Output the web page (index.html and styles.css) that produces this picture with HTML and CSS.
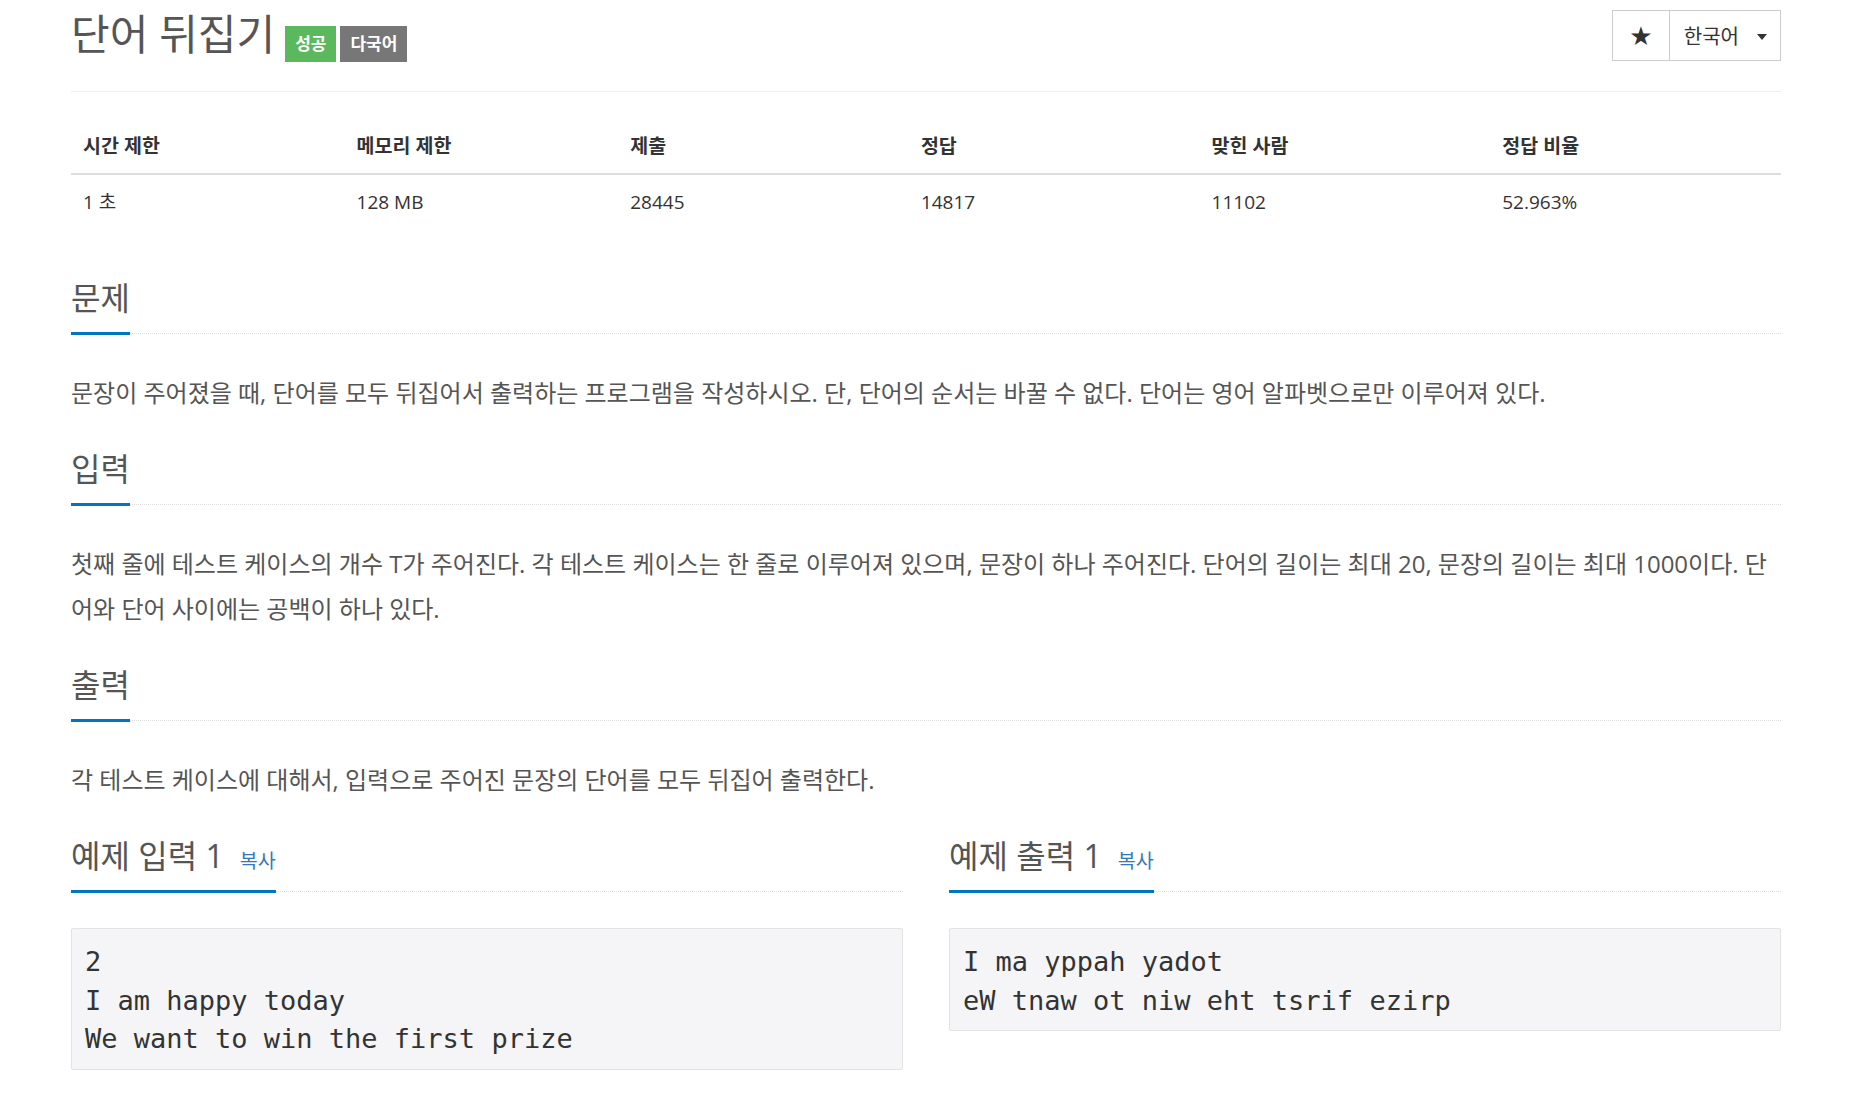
FILE: index.html
```html
<!DOCTYPE html>
<html>
	<head>
		<meta charset="UTF-8">
		<title>단어 뒤집기</title>
		<link rel="stylesheet" href="styles.css">
	</head>
	<body>
		<div class="container">
			<div class="page-header">
				<h1 class="title">
					<span class="title-text">단어 뒤집기</span>
					<span class="label label-success">성공</span>
					<span class="label label-default">다국어</span>
				</h1>
				<div class="btn-group">
					<button class="btn btn-star">★</button>
					<button class="btn btn-lang">한국어<span class="caret"></span></button>
				</div>
			</div>

			<table class="problem-info">
				<colgroup>
					<col class="col-narrow">
					<col class="col-narrow">
					<col class="col-wide">
					<col class="col-wide">
					<col class="col-wide">
					<col class="col-wide">
				</colgroup>
				<thead>
					<tr>
						<th>시간 제한</th>
						<th>메모리 제한</th>
						<th>제출</th>
						<th>정답</th>
						<th>맞힌 사람</th>
						<th>정답 비율</th>
					</tr>
				</thead>
				<tbody>
					<tr>
						<td>1 초</td>
						<td>128 MB</td>
						<td>28445</td>
						<td>14817</td>
						<td>11102</td>
						<td>52.963%</td>
					</tr>
				</tbody>
			</table>

			<section class="problem-section">
				<div class="headline"><h2>문제</h2></div>
				<p class="problem-text">문장이 주어졌을 때, 단어를 모두 뒤집어서 출력하는 프로그램을 작성하시오. 단, 단어의 순서는 바꿀 수 없다. 단어는 영어 알파벳으로만 이루어져 있다.</p>
			</section>

			<section class="problem-section">
				<div class="headline"><h2>입력</h2></div>
				<p class="problem-text">첫째 줄에 테스트 케이스의 개수 T가 주어진다. 각 테스트 케이스는 한 줄로 이루어져 있으며, 문장이 하나 주어진다. 단어의 길이는 최대 20, 문장의 길이는 최대 1000이다. 단어와 단어 사이에는 공백이 하나 있다.</p>
			</section>

			<section class="problem-section">
				<div class="headline"><h2>출력</h2></div>
				<p class="problem-text">각 테스트 케이스에 대해서, 입력으로 주어진 문장의 단어를 모두 뒤집어 출력한다.</p>
			</section>

			<div class="samples">
				<section class="sample">
					<div class="headline"><h2>예제 입력 1<a href="#" class="copy-button">복사</a></h2></div>
					<pre class="sample-data">2
I am happy today
We want to win the first prize</pre>
				</section>
				<section class="sample">
					<div class="headline"><h2>예제 출력 1<a href="#" class="copy-button">복사</a></h2></div>
					<pre class="sample-data">I ma yppah yadot
eW tnaw ot niw eht tsrif ezirp</pre>
				</section>
			</div>
		</div>
	</body>
</html>
```

FILE: styles.css
```css
*{
	box-sizing:border-box;
}
body{
	margin:0;
	background:#fff;
	font-family:"Open Sans","Noto Sans CJK KR",sans-serif;
	color:#333;
}
.container{
	width:1710px;
	margin-left:71px;
}

/* 제목 */
.page-header{
	display:flex;
	justify-content:space-between;
	align-items:flex-start;
	height:92px;
	border-bottom:1px solid #eee;
}
.title{
	display:flex;
	align-items:baseline;
	margin:10px 0 0;
	font-size:42px;
	line-height:47px;
	font-weight:400;
	color:#555;
}
.title-text{
	margin-right:10px;
}
.label{
	font-size:17px;
	line-height:36px;
	padding:0 10px;
	font-weight:700;
	color:#fff;
	margin-right:4px;
}
.label-success{
	background:#5cb85c;
}
.label-default{
	background:#777;
}

.btn-group{
	display:flex;
	margin-top:10px;
	height:51px;
	border:1px solid #ccc;
}
.btn{
	background:#fff;
	border:0;
	margin:0;
	padding:0;
	color:#333;
	font-family:inherit;
	display:flex;
	align-items:center;
}
.btn-star{
	width:57px;
	justify-content:center;
	border-right:1px solid #ccc;
	font-family:"DejaVu Sans",sans-serif;
	font-size:26px;
}
.btn-lang{
	padding:0 13px 0 14px;
	font-size:20px;
}
.caret{
	width:0;
	height:0;
	margin-left:18px;
	margin-top:3px;
	border-top:6px solid #333;
	border-left:5.5px solid transparent;
	border-right:5.5px solid transparent;
}

/* 정보 표 */
.problem-info{
	width:100%;
	border-collapse:collapse;
	margin:27px 0 49px;
}
.col-narrow{
	width:16%;
}
.col-wide{
	width:17%;
}
.problem-info th{
	text-align:left;
	padding:14px 12px;
	line-height:26px;
	font-size:19.5px;
	font-weight:700;
	color:#333;
	border-bottom:2px solid #ddd;
}
.problem-info td{
	padding:14px 12px;
	line-height:26px;
	font-size:19px;
	color:#333;
}

/* 본문 */
.problem-section{
	margin-top:34px;
}
.headline{
	display:flex;
	border-bottom:1px dotted #ddd;
}
.headline h2{
	margin:0 0 -2px;
	padding-bottom:14px;
	font-size:32px;
	line-height:40px;
	font-weight:400;
	color:#555;
	border-bottom:3px solid #0076c0;
}
.problem-text{
	margin:36px 0 0;
	font-size:24px;
	line-height:45px;
	color:#555;
}

/* 예제 */
.samples{
	display:grid;
	grid-template-columns:1fr 1fr;
	column-gap:46px;
	margin-top:34px;
}
.copy-button{
	margin-left:16px;
	font-size:19.5px;
	line-height:20px;
	color:#337ab7;
	text-decoration:none;
}
.sample-data{
	margin:36px 0 0;
	padding:14px 13px 10px;
	font-family:"DejaVu Sans Mono",monospace;
	font-size:27px;
	line-height:38.5px;
	color:#333;
	background:#f5f5f7;
	border:1px solid #e3e3e3;
	border-radius:2px;
}
```
